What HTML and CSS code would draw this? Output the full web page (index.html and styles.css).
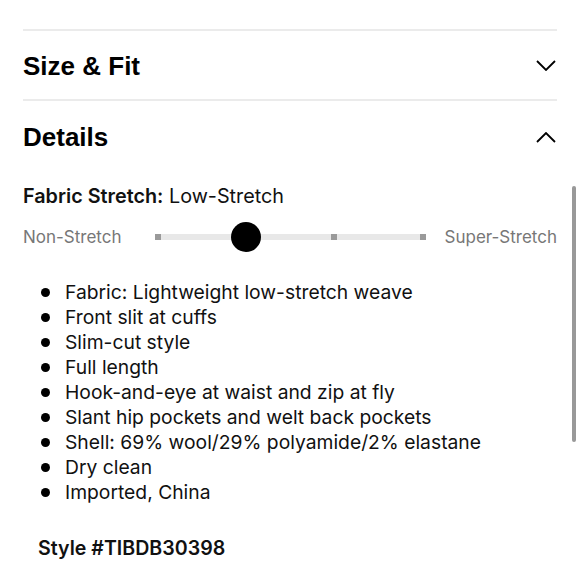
FILE: index.html
```html
<!DOCTYPE html>
<html>
<head>
<meta charset="utf-8">
<link rel="stylesheet" href="styles.css">
</head>
<body>
<div class="panel">
  <div class="acc-header first">
    <h2 class="acc-title">Size &amp; Fit</h2>
    <svg class="chev" width="20" height="11" viewBox="0 0 20 11"><polyline points="1,1 10,10 19,1" fill="none" stroke="#000" stroke-width="1.8"/></svg>
  </div>
  <div class="acc-header second">
    <h2 class="acc-title">Details</h2>
    <svg class="chev" width="20" height="11" viewBox="0 0 20 11"><polyline points="1,10 10,1 19,10" fill="none" stroke="#000" stroke-width="1.8"/></svg>
  </div>
  <div class="stretch-label"><span class="strong">Fabric Stretch:</span> Low-Stretch</div>
  <div class="slider-row">
    <span class="slider-end">Non-Stretch</span>
    <div class="track">
      <span class="tick t0"></span>
      <span class="tick t1"></span>
      <span class="tick t2"></span>
      <span class="tick t3"></span>
      <span class="knob"></span>
    </div>
    <span class="slider-end">Super-Stretch</span>
  </div>
  <ul class="features">
    <li>Fabric: Lightweight low-stretch weave</li>
    <li>Front slit at cuffs</li>
    <li>Slim-cut style</li>
    <li>Full length</li>
    <li>Hook-and-eye at waist and zip at fly</li>
    <li>Slant hip pockets and welt back pockets</li>
    <li>Shell: 69% wool/29% polyamide/2% elastane</li>
    <li>Dry clean</li>
    <li>Imported, China</li>
  </ul>
  <div class="style-no">Style #TIBDB30398</div>
</div>
<div class="scrollbar"></div>
</body>
</html>
```
FILE: styles.css
```css
html, body {
  margin: 0;
  padding: 0;
  background: #fff;
}
body {
  width: 580px;
  height: 580px;
  overflow: hidden;
  position: relative;
  font-family: Inter, "Liberation Sans", Arial, sans-serif;
  color: #111;
}
.panel {
  padding: 29px 23px 0 23px;
}
.acc-header {
  display: flex;
  justify-content: space-between;
  align-items: center;
  border-top: 2px solid #ebebeb;
  box-sizing: border-box;
}
.acc-header.first {
  padding-top: 1px;
  height: 70px;
}
.acc-header.second {
  height: 74px;
}
.acc-title {
  margin: 0;
  font-family: "Liberation Sans", Arial, sans-serif;
  font-weight: 700;
  font-size: 26px;
  line-height: 30px;
  color: #000;
}
.chev {
  display: block;
  margin-right: 1px;
}
.stretch-label {
  margin-top: 11px;
  font-size: 19.8px;
  line-height: 24px;
}
.strong {
  font-weight: 600;
}
.slider-row {
  display: flex;
  align-items: center;
  height: 30px;
  margin-top: 14px;
}
.slider-end {
  font-size: 17px;
  color: #777;
  white-space: nowrap;
}
.track {
  flex: 1;
  position: relative;
  height: 6px;
  background: #e8e8e8;
  margin: 0 19px 0 33px;
}
.tick {
  position: absolute;
  top: 0;
  width: 6px;
  height: 6px;
  background: #9a9a9a;
}
.t0 { left: 0; }
.t1 { left: calc((100% - 6px) / 3); }
.t2 { left: calc((100% - 6px) * 2 / 3); }
.t3 { left: calc(100% - 6px); }
.knob {
  position: absolute;
  top: 50%;
  left: calc((100% - 6px) / 3 + 3px);
  width: 30px;
  height: 30px;
  margin: -15px 0 0 -15px;
  border-radius: 50%;
  background: #000;
}
.features {
  list-style: none;
  margin: 28px 0 0 0;
  padding: 0;
  font-size: 19.3px;
  line-height: 25px;
}
.features li {
  display: flex;
  align-items: center;
}
.features li::before {
  content: "";
  flex: none;
  width: 9px;
  height: 9px;
  border-radius: 50%;
  background: #000;
  margin: 0 15px 0 18px;
}
.style-no {
  margin-top: 31px;
  padding-left: 15px;
  font-size: 19.6px;
  line-height: 24px;
  font-weight: 600;
}
.scrollbar {
  position: absolute;
  left: 572px;
  top: 186px;
  width: 4px;
  height: 256px;
  border-radius: 2px;
  background: #999;
}
```
